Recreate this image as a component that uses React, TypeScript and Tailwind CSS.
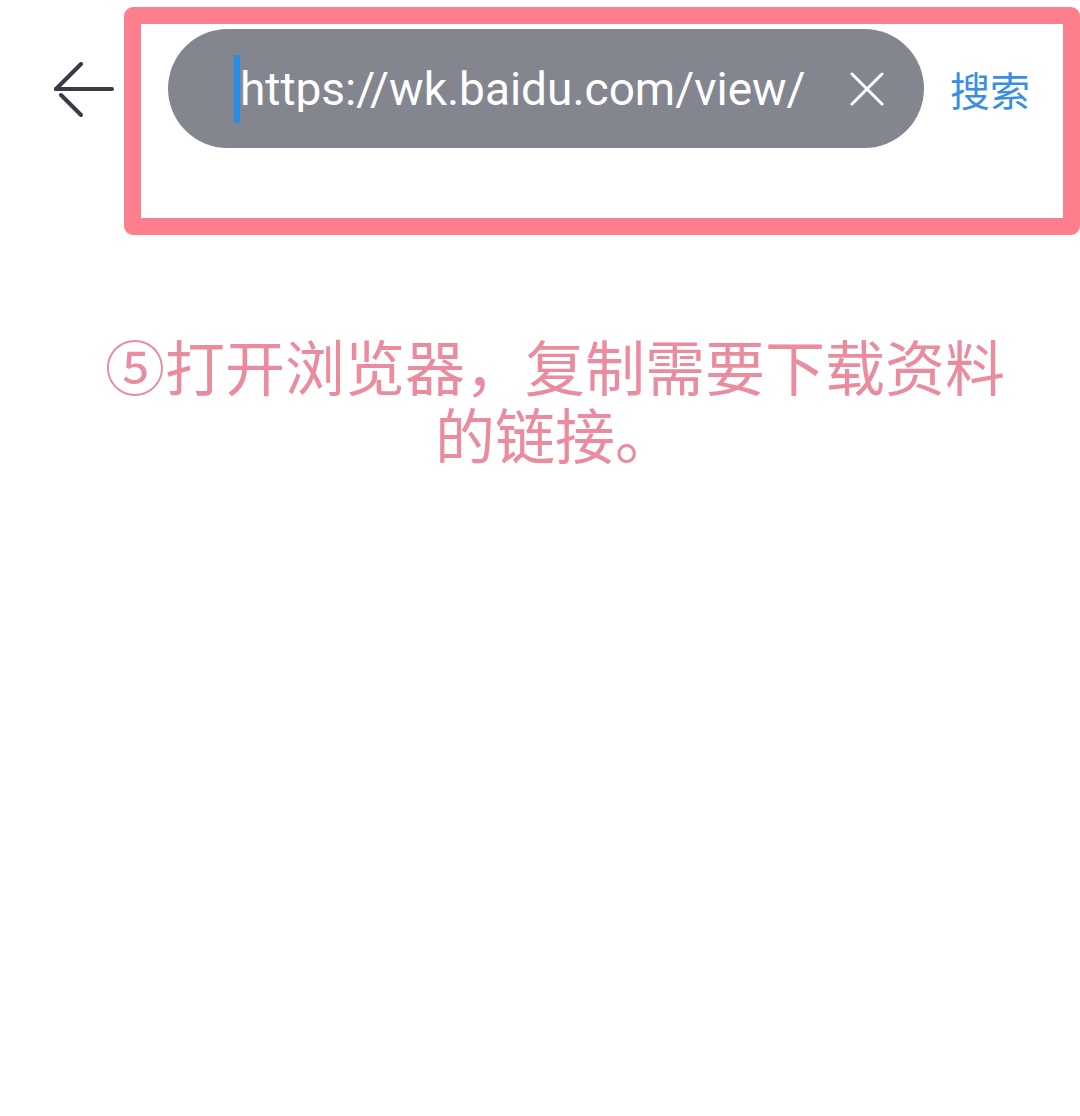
import React from 'react';

const cjk = { fontFamily: '"Noto Sans CJK SC", "Noto Sans", sans-serif' };
const latin = { fontFamily: 'Roboto, "Noto Sans", "Liberation Sans", sans-serif' };

const BackArrow: React.FC = () => (
  <svg width="62" height="58" viewBox="0 0 62 58" fill="none">
    <path d="M3 27 H59" stroke="#3b3b45" strokeWidth="4" strokeLinecap="round" />
    <path d="M3 27 L28 2" stroke="#3b3b45" strokeWidth="4" strokeLinecap="round" />
    <path d="M8 33 L28 53" stroke="#3b3b45" strokeWidth="4" strokeLinecap="round" />
  </svg>
);

const ClearIcon: React.FC = () => (
  <svg width="34" height="34" viewBox="0 0 34 34" fill="none">
    <path d="M2 2 L32 32 M32 2 L2 32" stroke="#ffffff" strokeWidth="3" strokeLinecap="round" />
  </svg>
);

export default function App() {
  return (
    <div className="w-[1080px] h-[1116px] bg-white overflow-hidden">
      <div className="flex items-start pt-[7px]">
        <div className="w-[124px] shrink-0 pt-[55px] pl-[53px]">
          <BackArrow />
        </div>

        <div className="flex-1 h-[228px] border-[17px] border-[#fd7f8e] rounded-[9px] pl-[27px] pt-[5px]">
          <div className="flex items-center">
            <div className="w-[756px] h-[119px] rounded-full bg-[#84868f] flex items-center pl-[66px] pr-[40px]">
              <span className="w-[6px] h-[68px] bg-[#2a8ee6] shrink-0" />
              <div className="w-[572px] overflow-hidden whitespace-nowrap">
                <span className="text-[46px] leading-none text-white" style={latin}>
                  https://wk.baidu.com/view/
                </span>
              </div>
              <div className="ml-auto flex items-center">
                <ClearIcon />
              </div>
            </div>
            <span className="ml-[26px] text-[40px] leading-none text-[#3a8fe0]" style={cjk}>
              搜索
            </span>
          </div>
        </div>
      </div>

      <div className="mt-[96px] ml-[90px] w-[930px] text-center">
        <p className="text-[60px] leading-[68px] text-[#eb8c9e]" style={cjk}>
          ⑤打开浏览器，复制需要下载资料的链接。
        </p>
      </div>
    </div>
  );
}
